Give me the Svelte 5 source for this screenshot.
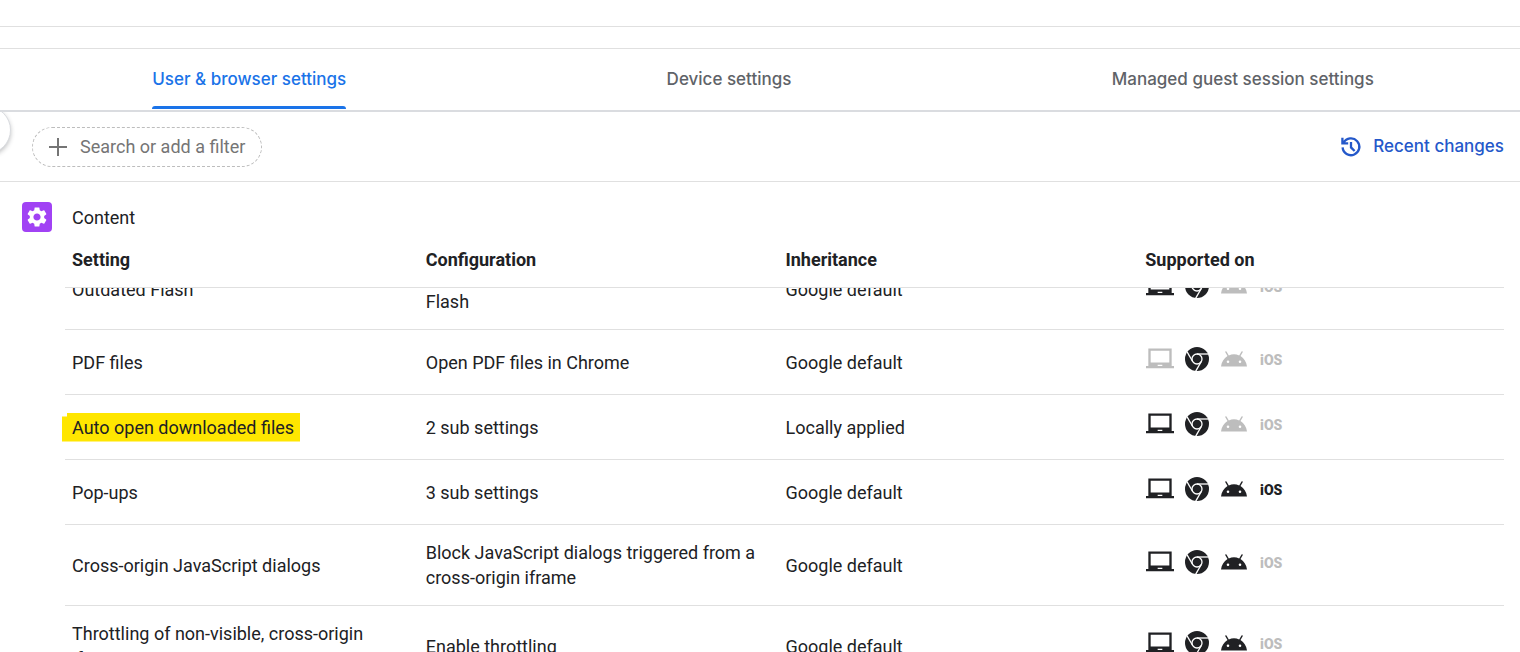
<script lang="ts">
  import { onMount } from "svelte";

  type Platform = "device" | "chrome" | "android" | "ios";

  type Setting = {
    name: string;
    configuration: string;
    inheritance: string;
    platforms: Platform[];
    highlighted?: boolean;
  };

  const tabs = [
    "User & browser settings",
    "Device settings",
    "Managed guest session settings"
  ];

  const columns = ["Setting", "Configuration", "Inheritance", "Supported on"];

  const settings: Setting[] = [
    {
      name: "Outdated Flash",
      configuration: "Disallow outdated versions of Adobe Flash",
      inheritance: "Google default",
      platforms: ["device", "chrome"]
    },
    {
      name: "PDF files",
      configuration: "Open PDF files in Chrome",
      inheritance: "Google default",
      platforms: ["chrome"]
    },
    {
      name: "Auto open downloaded files",
      configuration: "2 sub settings",
      inheritance: "Locally applied",
      platforms: ["device", "chrome"],
      highlighted: true
    },
    {
      name: "Pop-ups",
      configuration: "3 sub settings",
      inheritance: "Google default",
      platforms: ["device", "chrome", "android", "ios"]
    },
    {
      name: "Cross-origin JavaScript dialogs",
      configuration: "Block JavaScript dialogs triggered from a cross-origin iframe",
      inheritance: "Google default",
      platforms: ["device", "chrome", "android"]
    },
    {
      name: "Throttling of non-visible, cross-origin iframes",
      configuration: "Enable throttling",
      inheritance: "Google default",
      platforms: ["device", "chrome", "android"]
    }
  ];

  let activeTab = $state(0);
  let filter = $state("");
  let scroller: HTMLDivElement;

  onMount(() => {
    scroller.scrollTop = 39;
  });
</script>

<div class="page">
  <div class="strip strip-top"></div>
  <div class="strip"></div>

  <div class="tabs" role="tablist">
    {#each tabs as tab, i (tab)}
      <button
        type="button"
        role="tab"
        class:active={i === activeTab}
        aria-selected={i === activeTab}
        onclick={() => (activeTab = i)}
      >
        <span>{tab}</span>
      </button>
    {/each}
  </div>

  <div class="toolbar">
    <button class="handle" type="button" aria-label="Toggle side panel"></button>

    <label class="filter">
      <svg viewBox="0 0 24 24" width="24" height="24" aria-hidden="true">
        <path d="M11 3h2v8h8v2h-8v8h-2v-8H3v-2h8z" />
      </svg>
      <input
        type="text"
        placeholder="Search or add a filter"
        aria-label="Search or add a filter"
        bind:value={filter}
      />
    </label>

    <a class="recent" href="#recent-changes">
      <svg viewBox="0 0 24 24" width="24" height="24" aria-hidden="true">
        <path class="line" d="M4.600 7.800A8.400 8.400 0 1 1 3.600 12.400M3.400 2.800v5.600h5.800M12 7v5.400l3.600 3.600" />
      </svg>
      Recent changes
    </a>
  </div>

  <section>
    <div class="section-title">
      <span class="badge">
        <svg viewBox="0 0 24 24" width="24" height="24" aria-hidden="true">
          <path
            d="M19.14 12.94c.04-.3.06-.61.06-.94 0-.32-.02-.64-.07-.94l2.03-1.58c.18-.14.23-.41.12-.61l-1.92-3.32c-.12-.22-.37-.29-.59-.22l-2.39.96c-.5-.38-1.03-.7-1.62-.94l-.36-2.54c-.04-.24-.24-.41-.48-.41h-3.84c-.24 0-.43.17-.47.41l-.36 2.54c-.59.24-1.13.57-1.62.94l-2.39-.96c-.22-.08-.47 0-.59.22L2.74 8.87c-.12.21-.08.47.12.61l2.03 1.58c-.05.3-.09.63-.09.94s.02.64.07.94l-2.03 1.58c-.18.14-.23.41-.12.61l1.92 3.32c.12.22.37.29.59.22l2.39-.96c.5.38 1.03.7 1.62.94l.36 2.54c.05.24.24.41.48.41h3.84c.24 0 .44-.17.47-.41l.36-2.54c.59-.24 1.13-.56 1.62-.94l2.39.96c.22.08.47 0 .59-.22l1.92-3.32c.12-.22.07-.47-.12-.61l-2.01-1.58zM12 15.6c-1.98 0-3.6-1.62-3.6-3.6s1.62-3.6 3.6-3.6 3.6 1.62 3.6 3.6-1.62 3.6-3.6 3.6z"
          />
        </svg>
      </span>
      <h2>Content</h2>
    </div>

    <div class="scroller" bind:this={scroller}>
      <table>
        <thead>
          <tr>
            {#each columns as column (column)}
              <th scope="col">{column}</th>
            {/each}
          </tr>
        </thead>
        <tbody>
          {#each settings as s (s.name)}
            <tr>
              <td>
                {#if s.highlighted}<mark>{s.name}</mark>{:else}{s.name}{/if}
              </td>
              <td>{s.configuration}</td>
              <td>{s.inheritance}</td>
              <td>
                <div class="platforms">
                  <span class="icon" class:on={s.platforms.includes("device")}>
                    <svg viewBox="0 0 24 24" width="28" height="28" aria-hidden="true">
                      <path d="M22 18V3H2v15H0v2h24v-2h-2zm-8 0h-4v-1h4v1zm6-3H4V5h16v10z" />
                    </svg>
                  </span>
                  <span class="icon" class:on={s.platforms.includes("chrome")}>
                    <svg viewBox="-12 -12 24 24" width="24" height="24" aria-hidden="true">
                      <circle r="12" />
                      <g class="cut">
                        <circle r="5" />
                        <path d="M0-5H11.2" />
                        <path d="M0-5H11.2" transform="rotate(120)" />
                        <path d="M0-5H11.2" transform="rotate(240)" />
                      </g>
                    </svg>
                  </span>
                  <span class="icon" class:on={s.platforms.includes("android")}>
                    <svg viewBox="0 0 26 26" width="26" height="26" aria-hidden="true">
                      <path
                        d="M0 20.5C.5 16 2.900 12.200 6.500 10L4.300 6.200a.7.7 0 0 1 1.200-.7L7.800 9.400a14 14 0 0 1 10.400 0l2.300-3.900a.7.7 0 0 1 1.200.7L19.500 10c3.600 2.200 6 6 6.500 10.500zM7 17a1.300 1.300 0 1 0 0-2.600A1.300 1.300 0 0 0 7 17zm12 0a1.300 1.300 0 1 0 0-2.600 1.300 1.300 0 0 0 0 2.600z"
                      />
                    </svg>
                  </span>
                  <span class="icon ios" class:on={s.platforms.includes("ios")}>iOS</span>
                </div>
              </td>
            </tr>
          {/each}
        </tbody>
      </table>
    </div>
  </section>
</div>

<style>
  :global(body) {
    background: #fff;
  }

  .page {
    height: 100vh;
    display: flex;
    flex-direction: column;
    overflow: hidden;
    font-family: Roboto, "Liberation Sans", sans-serif;
    font-size: 18px;
    line-height: 25px;
    color: #202124;
  }

  .page * {
    box-sizing: border-box;
  }

  .page svg {
    display: block;
    flex: none;
    fill: currentColor;
  }

  .strip {
    flex: none;
    height: 22px;
    border-bottom: 1px solid #e0e0e0;
  }

  .strip-top {
    height: 27px;
  }

  .tabs {
    flex: none;
    display: flex;
    height: 63px;
    margin: 0 -14px 0 -8px;
    border-bottom: 2px solid #dadce0;
  }

  .tabs button {
    flex: 1 1 auto;
    display: flex;
    justify-content: center;
    padding: 0;
    border: 0;
    background: transparent;
    font: 500 17px/61px Inter, Roboto, sans-serif;
    color: #5f6368;
    cursor: pointer;
  }

  .tabs span {
    position: relative;
    height: 61px;
  }

  .tabs .active {
    color: #1a73e8;
  }

  .tabs .active span::after {
    content: "";
    position: absolute;
    left: 0;
    right: 0;
    bottom: 1px;
    height: 3px;
    border-radius: 3px 3px 0 0;
    background: #1a73e8;
  }

  .toolbar {
    flex: none;
    position: relative;
    display: flex;
    align-items: center;
    justify-content: space-between;
    height: 70px;
    padding: 0 16px 0 32px;
    border-bottom: 1px solid #e0e0e0;
    overflow: hidden;
  }

  .handle {
    position: absolute;
    left: -37px;
    top: -6px;
    width: 48px;
    height: 48px;
    padding: 0;
    border: 1px solid #dadce0;
    border-radius: 50%;
    background: #fff;
    box-shadow: 0 2px 4px rgba(60, 64, 67, 0.3);
  }

  .filter {
    display: flex;
    align-items: center;
    gap: 10px;
    width: 230px;
    height: 40px;
    padding: 0 13px;
    border: 1px dashed #bdbdbd;
    border-radius: 20px;
    color: #757575;
  }

  .filter input {
    flex: 1;
    min-width: 0;
    padding: 0;
    border: 0;
    outline: 0;
    background: transparent;
    font: inherit;
    color: #202124;
  }

  .filter input::placeholder {
    color: #757575;
    opacity: 1;
  }

  .recent {
    display: flex;
    align-items: center;
    gap: 10px;
    font: 500 17px/25px Inter, Roboto, sans-serif;
    color: #2458ca;
    text-decoration: none;
  }

  .recent .line {
    fill: none;
    stroke: currentColor;
    stroke-width: 2.300;
  }

  section {
    flex: 1;
    min-height: 0;
    display: flex;
    flex-direction: column;
    padding: 20px 16px 0 22px;
  }

  .section-title {
    flex: none;
    display: flex;
    align-items: center;
    gap: 20px;
    height: 30px;
  }

  .badge {
    display: grid;
    place-items: center;
    width: 30px;
    height: 30px;
    border-radius: 4px;
    background: #a142f4;
    color: #fff;
  }

  h2 {
    margin: 0;
    font-size: 18px;
    font-weight: 400;
  }

  .scroller {
    flex: 1;
    min-height: 0;
    margin-left: 33px;
    padding-left: 10px;
    overflow-y: auto;
    scrollbar-width: none;
  }

  table {
    width: 100%;
    table-layout: fixed;
    border-collapse: separate;
    border-spacing: 0;
  }

  th,
  td {
    padding: 0 24px 0 1px;
    border-bottom: 1px solid #e0e0e0;
    text-align: left;
    vertical-align: middle;
  }

  th:first-child,
  td:first-child {
    padding-left: 7px;
  }

  th {
    position: sticky;
    top: 0;
    z-index: 1;
    height: 56px;
    background: #fff;
    font-weight: 700;
  }

  td {
    height: 65px;
    padding-top: 15px;
    padding-bottom: 15px;
  }

  mark {
    display: inline-block;
    margin: -2px -6px -2px -10px;
    padding: 2px 6px 2px 10px;
    background: #ffe600;
    color: inherit;
    clip-path: polygon(5px 0, 100% 0, 100% 100%, 0 100%, 0 4px, 5px 4px);
  }

  .platforms {
    display: flex;
    align-items: center;
    gap: 7px;
    height: 30px;
    margin-top: -6px;
  }

  .icon {
    display: grid;
    place-items: center;
    width: 30px;
    height: 30px;
    color: #bdbdbd;
  }

  .icon.on {
    color: #202124;
  }

  .cut {
    stroke: #fff;
    stroke-width: 1.300;
  }

  .ios {
    font: 900 14px/32px Roboto, sans-serif;
  }
</style>
